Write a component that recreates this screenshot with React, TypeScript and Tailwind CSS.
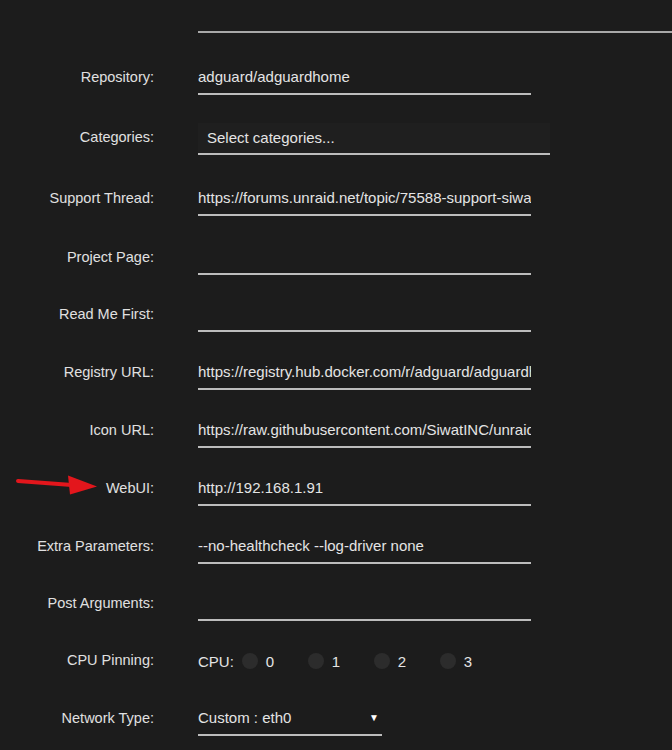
import React from 'react'

const font = { fontFamily: '"Liberation Sans", Arial, sans-serif' }

function Row({ label, className = '', children }: { label: string; className?: string; children: React.ReactNode }) {
  return (
    <div className={`flex items-start ${className}`}>
      <div className="w-[154px] mt-[4px] text-right text-[14.5px] leading-[20px] text-[#e0e0e0] whitespace-nowrap">{label}</div>
      <div className="ml-[44px]">{children}</div>
    </div>
  )
}

function TextField({ value = '', width = 'w-[333px]' }: { value?: string; width?: string }) {
  return (
    <div
      className={`${width} h-[32px] pt-[4px] leading-[20px] text-[15px] text-[#e4e4e4] border-b-2 border-[#bcbcbc] whitespace-nowrap overflow-hidden`}
    >
      {value}
    </div>
  )
}

function CpuBox({ n }: { n: number }) {
  return (
    <div className="flex items-center">
      <span className="w-[16px] h-[16px] rounded-full bg-[#2c2c2c] -mt-[3px]" />
      <span className="ml-[8px] w-[42px] text-[15px] text-[#e4e4e4]">{n}</span>
    </div>
  )
}

export default function App() {
  return (
    <div className="relative w-[672px] h-[750px] overflow-hidden bg-[#1c1c1c]" style={font}>
      {/* previous field, cut off above */}
      <div className="ml-[198px] h-[33px] border-b-2 border-[#a8a8a8]" />

      <Row label="Repository:" className="mt-[30px]">
        <TextField value="adguard/adguardhome" />
      </Row>

      <Row label="Categories:" className="mt-[28px]">
        <div className="w-[352px] h-[32px] pt-[5px] pl-[9px] leading-[20px] text-[15px] text-[#e4e4e4] bg-[#1f1f1f] border-b-2 border-[#bcbcbc]">
          Select categories...
        </div>
      </Row>

      <Row label="Support Thread:" className="mt-[29px]">
        <TextField value="https://forums.unraid.net/topic/75588-support-siwatinc-adguard-home/" />
      </Row>

      <Row label="Project Page:" className="mt-[27px]">
        <TextField />
      </Row>

      <Row label="Read Me First:" className="mt-[25px]">
        <TextField />
      </Row>

      <Row label="Registry URL:" className="mt-[26px]">
        <TextField value="https://registry.hub.docker.com/r/adguard/adguardhome/" />
      </Row>

      <Row label="Icon URL:" className="mt-[26px]">
        <TextField value="https://raw.githubusercontent.com/SiwatINC/unraid-ca-repository/master/icons/adguard.png" />
      </Row>

      <Row label="WebUI:" className="mt-[26px]">
        <TextField value="http://192.168.1.91" />
      </Row>

      <Row label="Extra Parameters:" className="mt-[26px]">
        <TextField value="--no-healthcheck --log-driver none" />
      </Row>

      <Row label="Post Arguments:" className="mt-[25px]">
        <TextField />
      </Row>

      <Row label="CPU Pinning:" className="mt-[25px]">
        <div className="h-[32px] flex items-center">
          <span className="text-[15px] text-[#e4e4e4] mr-[8px]">CPU:</span>
          {[0, 1, 2, 3].map((n) => (
            <CpuBox key={n} n={n} />
          ))}
        </div>
      </Row>

      <Row label="Network Type:" className="mt-[26px]">
        <div className="w-[184px] h-[32px] pt-[4px] pr-[3px] leading-[20px] text-[15px] text-[#e4e4e4] border-b-2 border-[#bcbcbc] flex justify-between">
          <span>Custom : eth0</span>
          <span className="text-[10px] text-white">▼</span>
        </div>
      </Row>

      {/* red pointer next to WebUI */}
      <svg className="absolute left-[14px] top-[474px]" width="90" height="26" viewBox="0 0 90 26">
        <path d="M4 7 L58 11" stroke="#e3161c" strokeWidth="4" strokeLinecap="round" />
        <path d="M54 1.5 L83 12.5 L56 20.5 Z" fill="#e3161c" />
      </svg>
    </div>
  )
}
